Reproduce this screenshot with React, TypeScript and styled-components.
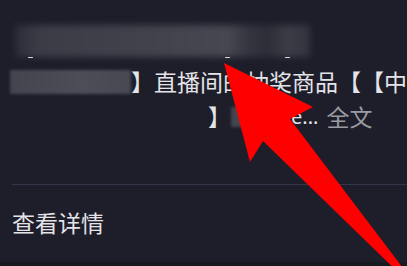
import React from "react";
import styled, { createGlobalStyle } from "styled-components";

const Global = createGlobalStyle`
  html, body { margin: 0; padding: 0; background: #1e1e2a; }
  body {
    font-family: "Noto Sans CJK SC", "Noto Sans", sans-serif;
    text-spacing-trim: space-all;
    font-kerning: none;
  }
`;

const Screen = styled.div`
  position: relative;
  width: 407px;
  height: 266px;
  overflow: hidden;
  background: #1e1e2a;
  display: flex;
  flex-direction: column;
`;

const Post = styled.div`
  display: flex;
  flex-direction: column;
  padding-left: 12px;
`;

const BlurWrap = styled.div`
  position: relative;
  margin-top: 25px;
  margin-left: 3px;
  width: 295px;
  height: 32px;
`;

const BlurBar = styled.div`
  width: 100%;
  height: 100%;
  background: linear-gradient(
    90deg,
    #2c2c37 0%,
    #3c3c47 8%,
    #42424c 45%,
    #474751 72%,
    #33333e 80%,
    #2e2e39 86%,
    #3c3c46 92%,
    #34343f 100%
  );
  filter: blur(3px);
`;

const Tick = styled.span<{ $x: number }>`
  position: absolute;
  left: ${(p) => p.$x}px;
  bottom: -1px;
  width: 5px;
  height: 1.5px;
  background: #d8d8dc;
  border-radius: 1px;
`;

const TextLine = styled.div<{ $indent?: number }>`
  height: 35px;
  line-height: 35px;
  font-size: 23px;
  color: #e4e4e8;
  white-space: nowrap;
  overflow: visible;
  padding-left: ${(p) => p.$indent ?? 0}px;
  display: flex;
  align-items: center;
  font-feature-settings: "halt" 0, "chws" 0, "palt" 0;
`;

const FirstLine = styled(TextLine)`
  margin-top: 7px;
`;

const Smudge = styled.span<{ $w: number; $h: number; $offset?: number }>`
  display: inline-block;
  flex: none;
  width: ${(p) => p.$w}px;
  height: ${(p) => p.$h}px;
  margin-left: ${(p) => p.$offset ?? 0}px;
  background: linear-gradient(90deg, #44444f, #4d4d58 60%, #484853);
  filter: blur(1.5px);
`;

const Latin = styled.span`
  font-family: "Noto Sans", sans-serif;
  font-size: 20px;
  color: #e4e4e8;
  margin-left: 4px;
`;

const More = styled.span`
  color: #9b9ba2;
  margin-left: 8px;
`;

const Divider = styled.div`
  margin-top: 50px;
  margin-left: 12px;
  height: 1px;
  background: #35354a;
`;

const DetailRow = styled.div`
  margin-top: 20px;
  padding-left: 12px;
  height: 35px;
  line-height: 35px;
  font-size: 23px;
  color: #e4e4e8;
`;

const BottomStrip = styled.div`
  margin-top: auto;
  height: 4px;
  background: #18181f;
`;

const ArrowLayer = styled.svg`
  position: absolute;
  left: 0;
  top: 0;
  width: 407px;
  height: 266px;
  pointer-events: none;
`;

export default function App() {
  return (
    <>
      <Global />
      <Screen>
        <Post>
          <BlurWrap>
            <BlurBar />
            <Tick $x={13} />
            <Tick $x={210} />
            <Tick $x={270} />
          </BlurWrap>
          <FirstLine>
            <Smudge $w={121} $h={24} $offset={-2} />
            <span>】直播间的抽奖商品【【中</span>
          </FirstLine>
          <TextLine $indent={196}>
            <span>】</span>
            <Smudge $w={56} $h={20} />
            <Latin>e...</Latin>
            <More>全文</More>
          </TextLine>
        </Post>
        <Divider />
        <DetailRow>查看详情</DetailRow>
        <BottomStrip />
        <ArrowLayer viewBox="0 0 407 266">
          <polygon
            points="224,63 313,107 290,119 412,280 406,280 263,141 250,162"
            fill="#ff0000"
          />
        </ArrowLayer>
      </Screen>
    </>
  );
}
